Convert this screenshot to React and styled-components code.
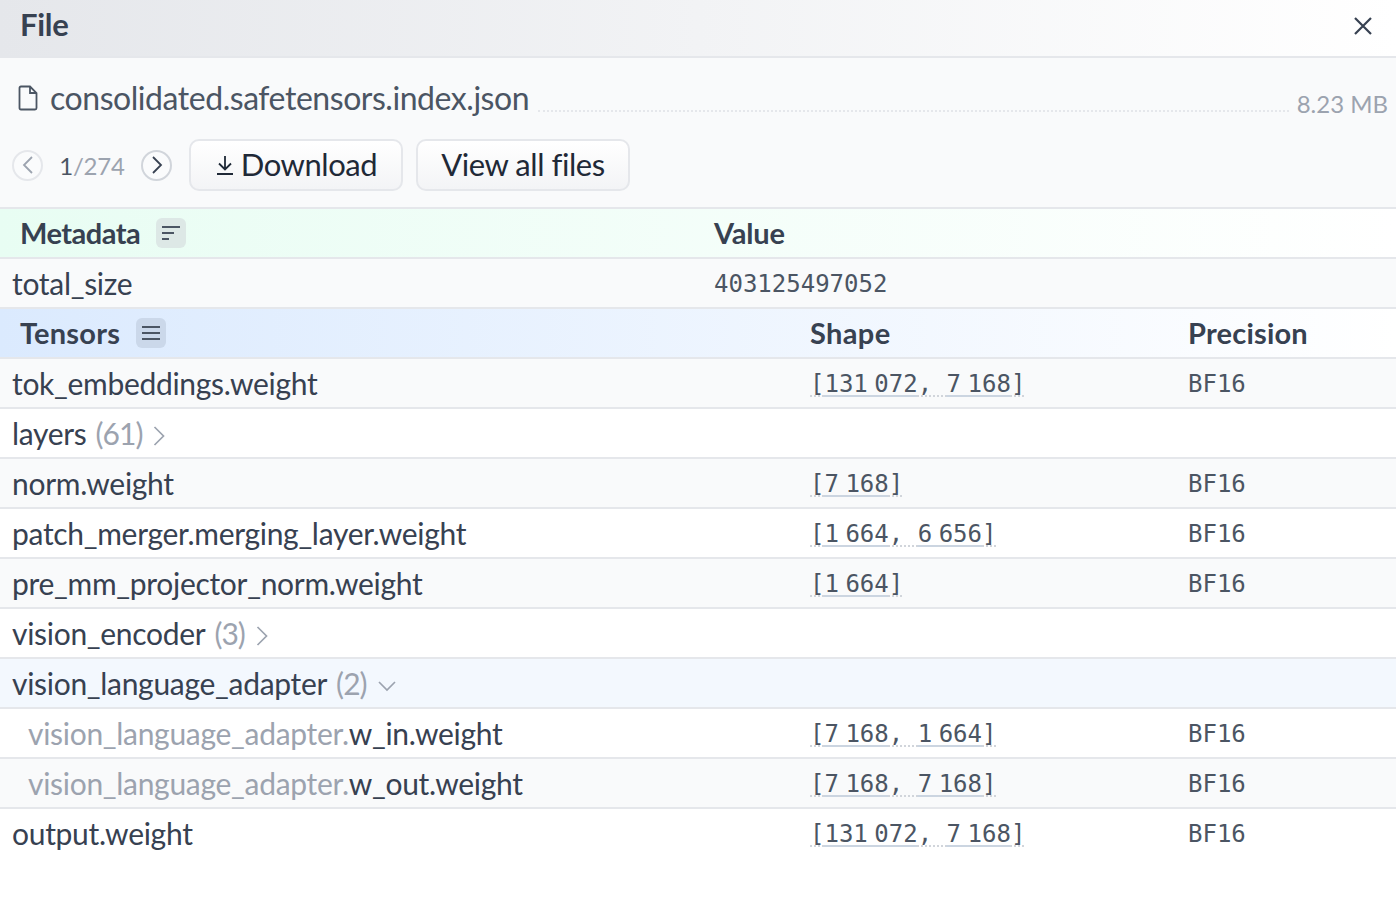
import React from "react";
import styled, { createGlobalStyle } from "styled-components";

const Global = createGlobalStyle`
  html, body { margin: 0; padding: 0; background: #fff; }
  body { font-family: "Lato", "Noto Sans", sans-serif; color: #374151; }
  * { box-sizing: border-box; }
`;

const Page = styled.div`
  width: 1396px;
  height: 904px;
  overflow: hidden;
  background: #fff;
`;
const TitleBar = styled.header`
  height: 58px;
  display: flex;
  align-items: center;
  justify-content: space-between;
  padding: 0 23px 8px 20px;
  border-bottom: 2px solid #e5e7eb;
  background: linear-gradient(to right, #e5e7eb, #ffffff);
`;
const Title = styled.h1`
  margin: 0;
  font-size: 31px;
  font-weight: 700;
  color: #374151;
  letter-spacing: -0.3px;
`;
const CloseBtn = styled.button`
  display: flex;
  padding: 0;
  margin: 3px 0 0;
  border: 0;
  background: none;
  color: #374151;
`;
const Top = styled.section`
  height: 149px;
  background: #f9fafb;
  padding: 19px 8px 0 12px;
`;
const FileRow = styled.div`
  display: flex;
  align-items: baseline;
  height: 41px;
`;
const FileName = styled.span`
  display: inline-flex;
  align-items: center;
  gap: 12px;
  font-size: 32px;
  color: #4b5563;
  letter-spacing: -0.45px;
  line-height: 41px;
  svg { flex: none; align-self: center; margin-left: 6px; }
`;
const Dots = styled.span`
  flex: 1;
  align-self: flex-end;
  margin: 0 8px 6px 9px;
  border-top: 2px dotted #e5e7eb;
`;
const FileSize = styled.span`
  font-size: 24px;
  color: #9ca3af;
  position: relative;
  top: 2px;
`;
const Controls = styled.div`
  display: flex;
  align-items: center;
  margin-top: 21px;
`;
const RoundBtn = styled.span`
  width: 31px;
  height: 31px;
  border-radius: 50%;
  display: flex;
  align-items: center;
  justify-content: center;
  border: 2px solid ${(p) => (p.$off ? "#e5e7eb" : "#d1d5db")};
  color: ${(p) => (p.$off ? "#9ca3af" : "#374151")};
  background: #fafbfc;
`;
const Pager = styled.span`
  width: 98px;
  text-align: center;
  font-size: 24px;
  letter-spacing: -0.2px;
  color: #9ca3af;
  b { font-weight: 400; color: #4b5563; }
`;
const ActionBtn = styled.button`
  display: flex;
  align-items: center;
  justify-content: center;
  gap: 6px;
  width: 214px;
  height: 52px;
  margin-left: ${(p) => p.$ml}px;
  padding: 0 0 2px;
  border: 2px solid #e5e7eb;
  border-radius: 10px;
  background: linear-gradient(to bottom, #ffffff, #f3f4f6);
  font: inherit;
  font-size: 31px;
  color: #1f2937;
  letter-spacing: -0.45px;
  svg { position: relative; top: 1px; }
`;
const Row = styled.div`
  height: 50px;
  display: grid;
  grid-template-columns: ${(p) => p.$cols};
  align-items: center;
  border-bottom: 2px solid ${(p) => (p.$last ? "transparent" : "#e5e7eb")};
  background: ${(p) => p.$bg || "#fff"};
`;
const Head = styled(Row)`
  background: linear-gradient(to right, ${(p) => p.$from}, #ffffff);
  border-top: ${(p) => (p.$top ? "2px solid #e5e7eb" : "0")};
  height: ${(p) => (p.$top ? "52px" : "50px")};
`;
const HeadCell = styled.div`
  display: flex;
  align-items: center;
  gap: 16px;
  padding: 0 0 2px ${(p) => (p.$first ? "20px" : "12px")};
  font-size: 29px;
  font-weight: 700;
  color: #374151;
  letter-spacing: ${(p) => p.$ls}px;
`;
const SortBtn = styled.span`
  width: 30px;
  height: 30px;
  margin-bottom: -2px;
  border-radius: 6px;
  display: flex;
  align-items: center;
  justify-content: center;
  background: ${(p) => p.$bg};
  color: #4b5563;
`;
const Name = styled.div`
  display: flex;
  align-items: center;
  padding-left: ${(p) => (p.$nested ? "28px" : "12px")};
  font-size: 30px;
  color: #374151;
  letter-spacing: -0.3px;
  white-space: nowrap;
`;
const Prefix = styled.span`
  color: #9ca3af;
`;
const Count = styled.span`
  color: #9ca3af;
  margin-left: 9px;
  letter-spacing: -1px;
`;
const Caret = styled.svg`
  margin: ${(p) => p.$top}px 0 0 10px;
  color: #9ca3af;
  flex: none;
`;
const Mono = styled.div`
  padding: 2px 0 0 12px;
  font-family: "DejaVu Sans Mono", monospace;
  font-size: 24px;
  color: #4b5563;
`;
const ShapeLink = styled.span`
  text-decoration: underline dotted #d1d5db 2px;
  text-underline-offset: 3px;
  text-decoration-skip-ink: none;
`;
const Dim = styled.span`
  text-decoration: underline solid #cbd5e1 2px;
  text-underline-offset: 3px;
  text-decoration-skip-ink: none;
`;
const ThinSpace = styled.span`
  font-size: 10.8px;
`;

const Dims = ({ value }) => {
  const [head, tail] = value.split(" ");
  return (
    <Dim>
      {head}
      <ThinSpace>{"\u00a0"}</ThinSpace>
      {tail}
    </Dim>
  );
};
const Shape = ({ dims }) => (
  <ShapeLink>
    [
    {dims.map((d, i) => (
      <React.Fragment key={d + i}>
        {i > 0 && ",\u00a0"}
        <Dims value={d} />
      </React.Fragment>
    ))}
    ]
  </ShapeLink>
);
const Right = () => (
  <Caret $top={6} width="14" height="22" viewBox="0 0 14 22" fill="none" stroke="currentColor" strokeWidth="1.7"><path d="M2.5 2 L11.5 11 L2.5 20" /></Caret>
);
const Down = () => (
  <Caret $top={6} width="20" height="14" viewBox="0 0 20 14" fill="none" stroke="currentColor" strokeWidth="1.7"><path d="M2 3 L10 11 L18 3" /></Caret>
);

const TCOLS = "798px 378px 1fr";
const tensors = [
  { n: "tok_embeddings.weight", d: ["131 072", "7 168"], bg: "#f9fafb" },
  { n: "layers", c: 61, bg: "#fff" },
  { n: "norm.weight", d: ["7 168"], bg: "#f9fafb" },
  { n: "patch_merger.merging_layer.weight", d: ["1 664", "6 656"], bg: "#fff" },
  { n: "pre_mm_projector_norm.weight", d: ["1 664"], bg: "#f9fafb" },
  { n: "vision_encoder", c: 3, bg: "#fff" },
  { n: "vision_language_adapter", c: 2, open: true, bg: "#f3f8fe" },
  { p: "vision_language_adapter.", n: "w_in.weight", d: ["7 168", "1 664"], bg: "#fff" },
  { p: "vision_language_adapter.", n: "w_out.weight", d: ["7 168", "7 168"], bg: "#f9fafb" },
  { n: "output.weight", d: ["131 072", "7 168"], bg: "#fff", last: true },
];

export default function App() {
  return (
    <Page>
      <Global />
      <TitleBar>
        <Title>File</Title>
        <CloseBtn aria-label="Close">
          <svg width="20" height="20" viewBox="0 0 20 20" fill="none" stroke="currentColor" strokeWidth="2.2"><path d="M2 2 L18 18 M18 2 L2 18" /></svg>
        </CloseBtn>
      </TitleBar>
      <Top>
        <FileRow>
          <FileName>
            <svg width="20" height="26" viewBox="0 0 20 26" fill="none" stroke="#4b5563" strokeWidth="1.8"><path d="M3 1.5 H12 L18.5 8 V23 Q18.5 24.5 17 24.5 H3 Q1.5 24.5 1.5 23 V3 Q1.5 1.5 3 1.5 Z M12 1.5 V8 H18.5" /></svg>
            consolidated.safetensors.index.json
          </FileName>
          <Dots />
          <FileSize>8.23 MB</FileSize>
        </FileRow>
        <Controls>
          <RoundBtn $off>
            <svg width="14" height="20" viewBox="0 0 14 20" fill="none" stroke="currentColor" strokeWidth="1.8"><path d="M11 2 L3 10 L11 18" /></svg>
          </RoundBtn>
          <Pager><b>1</b>/274</Pager>
          <RoundBtn>
            <svg width="14" height="20" viewBox="0 0 14 20" fill="none" stroke="currentColor" strokeWidth="1.8"><path d="M3 2 L11 10 L3 18" /></svg>
          </RoundBtn>
          <ActionBtn $ml={17}>
            <svg width="20" height="22" viewBox="0 0 20 22" fill="none" stroke="#1f2937" strokeWidth="1.8"><path d="M10 2 V15 M4 9.5 L10 15.5 L16 9.5 M2 20 H18" /></svg>
            Download
          </ActionBtn>
          <ActionBtn $ml={13}>View all files</ActionBtn>
        </Controls>
      </Top>
      <Head $cols="702px 1fr" $from="#e8fdf3" $top>
        <HeadCell $first $ls={-0.5}>
          Metadata
          <SortBtn $bg="#dde8e6">
            <svg width="18" height="16" viewBox="0 0 18 16" fill="none" stroke="currentColor" strokeWidth="2"><path d="M0 2 H18 M0 8 H12 M0 14 H7" /></svg>
          </SortBtn>
        </HeadCell>
        <HeadCell $ls={-0.2}>Value</HeadCell>
      </Head>
      <Row $cols="702px 1fr" $bg="#f9fafb">
        <Name>total_size</Name>
        <Mono>403125497052</Mono>
      </Row>
      <Head $cols={TCOLS} $from="#dbeafe">
        <HeadCell $first $ls={0.2}>
          Tensors
          <SortBtn $bg="#cbd8ea">
            <svg width="18" height="16" viewBox="0 0 18 16" fill="none" stroke="currentColor" strokeWidth="2"><path d="M0 2 H18 M0 8 H18 M0 14 H18" /></svg>
          </SortBtn>
        </HeadCell>
        <HeadCell $ls={0.35}>Shape</HeadCell>
        <HeadCell $ls={0.2}>Precision</HeadCell>
      </Head>
      {tensors.map((t) => (
        <Row key={t.n} $cols={TCOLS} $bg={t.bg} $last={t.last}>
          <Name $nested={!!t.p}>
            {t.p && <Prefix>{t.p}</Prefix>}
            {t.n}
            {t.c != null && <Count>({t.c})</Count>}
            {t.c != null && (t.open ? <Down /> : <Right />)}
          </Name>
          <Mono>{t.d && <Shape dims={t.d} />}</Mono>
          <Mono>{t.d && "BF16"}</Mono>
        </Row>
      ))}
    </Page>
  );
}
